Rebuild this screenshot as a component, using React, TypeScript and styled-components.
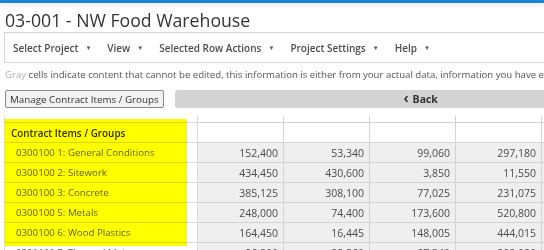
import React from 'react';
import styled, { createGlobalStyle } from 'styled-components';

const GlobalStyle = createGlobalStyle`
  html, body {
    margin: 0;
    padding: 0;
    background: #fff;
    overflow: hidden;
  }
  body {
    font-family: 'Open Sans', 'Liberation Sans', sans-serif;
    color: #333;
  }
`;

const menuItems = ['Select Project', 'View', 'Selected Row Actions', 'Project Settings', 'Help'];

const rows = [
  { name: '0300100 1: General Conditions', values: ['152,400', '53,340', '99,060', '297,180', '0'] },
  { name: '0300100 2: Sitework', values: ['434,450', '430,600', '3,850', '11,550', '0'] },
  { name: '0300100 3: Concrete', values: ['385,125', '308,100', '77,025', '231,075', '0'] },
  { name: '0300100 5: Metals', values: ['248,000', '74,400', '173,600', '520,800', '0'] },
  { name: '0300100 6: Wood Plastics', values: ['164,450', '16,445', '148,005', '444,015', '0'] },
  { name: '0300100 7: Thermal Moisture', values: ['96,200', '28,860', '67,340', '202,020', '0'] },
];

const App: React.FC = () => (
  <>
    <GlobalStyle />
    <TopBar />
    <Page>
      <Title>03-001 - NW Food Warehouse</Title>
      <MenuBar>
        {menuItems.map((item) => (
          <MenuItem key={item}>
            {item}
            <Caret>▼</Caret>
          </MenuItem>
        ))}
      </MenuBar>
      <Info>
        <Muted>Gray</Muted> cells indicate content that cannot be edited, this information is either from
        your actual data, information you have entered elsewhere
      </Info>
      <Actions>
        <ManageButton>Manage Contract Items / Groups</ManageButton>
        <BackBar>
          <Chevron>‹</Chevron> Back
        </BackBar>
      </Actions>
      <TableWrap>
        <Grid>
          <colgroup>
            <col style={{ width: 193 }} />
            <col style={{ width: 86 }} />
            <col style={{ width: 86 }} />
            <col style={{ width: 86 }} />
            <col style={{ width: 86 }} />
            <col style={{ width: 86 }} />
          </colgroup>
          <tbody>
            <StubRow>
              <NameCell />
              <NumCell $blank />
              <NumCell $blank />
              <NumCell $blank />
              <NumCell $blank />
              <NumCell $blank />
            </StubRow>
            <tr>
              <NameCell $group>Contract Items / Groups</NameCell>
              <NumCell $blank />
              <NumCell $blank />
              <NumCell $blank />
              <NumCell $blank />
              <NumCell $blank />
            </tr>
            {rows.map((r) => (
              <tr key={r.name}>
                <NameCell>{r.name}</NameCell>
                {r.values.map((v, i) => (
                  <NumCell key={i}>{v}</NumCell>
                ))}
              </tr>
            ))}
          </tbody>
        </Grid>
        <Highlight />
      </TableWrap>
    </Page>
  </>
);

const TopBar = styled.div`
  height: 3px;
  background: #1b84d6;
  box-shadow: 0 2px 5px rgba(0, 0, 0, 0.12);
`;

const Page = styled.div`
  width: 700px;
  padding: 6px 0 0 4px;
`;

const Title = styled.h1`
  margin: 0 0 0 1px;
  font-size: 17.7px;
  font-weight: 400;
  line-height: 23px;
  color: #333;
`;

const MenuBar = styled.nav`
  display: flex;
  align-items: center;
  gap: 16px;
  height: 29px;
  padding-left: 8px;
  border: 1px solid #d6d6d6;
  border-right: none;
`;

const MenuItem = styled.span`
  display: inline-flex;
  align-items: center;
  font-size: 10px;
  font-weight: 600;
  color: #4d4d4d;
  white-space: nowrap;
`;

const Caret = styled.span`
  font-size: 6px;
  margin-left: 7px;
  color: #555;
`;

const Info = styled.p`
  margin: 5px 0 0 1px;
  font-size: 9.6px;
  line-height: 14px;
  color: #555;
  white-space: nowrap;
`;

const Muted = styled.span`
  color: #b0b0b0;
`;

const Actions = styled.div`
  display: flex;
  align-items: center;
  gap: 11px;
  margin-top: 8px;
  padding-left: 1px;
`;

const ManageButton = styled.button`
  height: 18px;
  padding: 0 4px;
  border: 1px solid #8a8a8a;
  border-radius: 2px;
  background: #f2f2f2;
  font-family: 'Open Sans', 'Liberation Sans', sans-serif;
  font-size: 9.8px;
  color: #333;
  white-space: nowrap;
`;

const BackBar = styled.div`
  display: flex;
  align-items: center;
  justify-content: center;
  width: 492px;
  height: 18px;
  border-radius: 3px;
  background: #d3d3d3;
  font-size: 10.5px;
  font-weight: 700;
  color: #333;
`;

const Chevron = styled.span`
  font-size: 14px;
  line-height: 1;
  margin-right: 4px;
  margin-top: -2px;
`;

const TableWrap = styled.div`
  position: relative;
  margin-top: 8px;
`;

const Grid = styled.table`
  border-collapse: collapse;
  table-layout: fixed;
  width: 623px;
  font-size: 10.5px;
`;

const StubRow = styled.tr`
  td {
    height: 6px;
    padding: 0;
    border-top: none;
  }
`;

const NameCell = styled.td<{ $group?: boolean }>`
  height: 19px;
  padding: 0 0 0 ${(p) => (p.$group ? 6 : 11)}px;
  border: 1px solid #d8d8d8;
  background: #fff;
  font-size: ${(p) => (p.$group ? 9.9 : 9.7)}px;
  font-weight: ${(p) => (p.$group ? 600 : 400)};
  color: ${(p) => (p.$group ? '#333' : '#666')};
  white-space: nowrap;
  overflow: hidden;
`;

const NumCell = styled.td<{ $blank?: boolean }>`
  height: 19px;
  padding: 0 5px 0 0;
  border: 1px solid #d3d3d3;
  background: ${(p) => (p.$blank ? '#fff' : '#efefef')};
  text-align: right;
  color: #4a4a4a;
  white-space: nowrap;
`;

const Highlight = styled.div`
  position: absolute;
  left: 1px;
  top: 3px;
  width: 182px;
  height: 127px;
  background: #ffff00;
  mix-blend-mode: multiply;
  pointer-events: none;
`;

export default App;
